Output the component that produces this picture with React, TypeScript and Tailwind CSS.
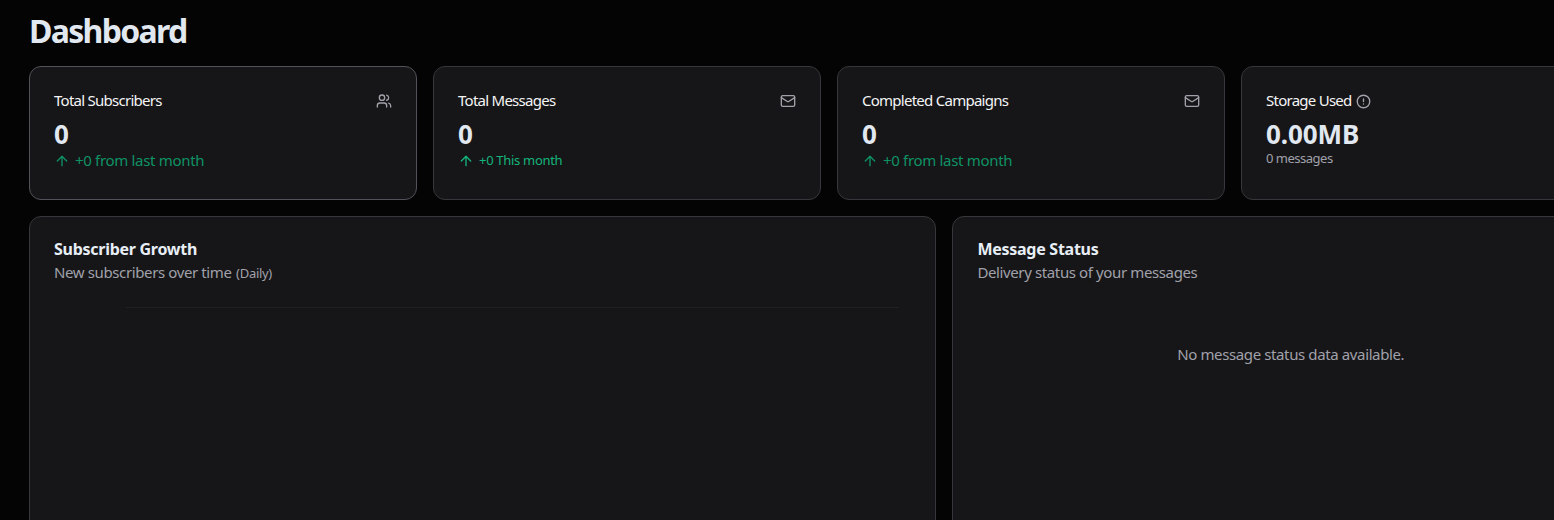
import { ReactNode } from 'react';
import { ArrowUp, CircleAlert, Mail, Users } from 'lucide-react';

interface StatCardProps {
  title: ReactNode;
  value: string;
  icon?: ReactNode;
  active?: boolean;
  children: ReactNode;
}

function StatCard({ title, value, icon, active, children }: StatCardProps) {
  return (
    <div
      className={`h-[134px] rounded-xl border bg-[#161618] p-6 ${
        active ? 'border-[#52525b]' : 'border-[#36363c]'
      }`}
    >
      <div className="flex h-5 items-center justify-between text-[#f4f4f5]">
        <div className="flex items-center gap-1 text-[15px] leading-5">{title}</div>
        {icon}
      </div>
      <div className="mt-2 h-8 text-[26px] leading-[30px] font-bold tracking-[-0.1px] text-[#e2e8f0]">
        {value}
      </div>
      {children}
    </div>
  );
}

function CardTitle({ children }: { children: ReactNode }) {
  return <span className="pb-0.5 leading-[18px] tracking-[-0.74px]">{children}</span>;
}

function MonthlyGrowth() {
  return (
    <div className="flex h-5 items-center gap-[5px] text-[#0f9365]">
      <ArrowUp size={16} strokeWidth={2} />
      <span className="pb-0.5 text-[15px] leading-[18px] tracking-[-0.32px]">+0 from last month</span>
    </div>
  );
}

interface PanelProps {
  title: string;
  description: ReactNode;
  className: string;
  children: ReactNode;
}

function Panel({ title, description, className, children }: PanelProps) {
  return (
    <section className={`h-[420px] rounded-xl border border-[#36363c] bg-[#161618] p-6 ${className}`}>
      <h2 className="h-4 text-[16px] leading-4 font-bold tracking-[-0.27px] text-[#e8eef5]">{title}</h2>
      <p className="mt-[5px] h-5 text-[15px] leading-5 tracking-[-0.38px] text-[#a1a1aa]">
        {description}
      </p>
      {children}
    </section>
  );
}

export default function App() {
  return (
    <div className="h-[520px] w-full overflow-hidden bg-[#040404] font-['Noto_Sans',sans-serif]">
      <main className="w-[1629px] pl-[29px]">
        <h1 className="h-[66px] pt-[11px] text-[32px] leading-10 font-bold tracking-[-1.7px] text-[#e2e8f0]">
          Dashboard
        </h1>

        <div className="grid grid-cols-4 gap-4">
          <StatCard
            title={<CardTitle>Total Subscribers</CardTitle>}
            value="0"
            icon={<Users size={16} className="text-[#a1a1aa]" />}
            active
          >
            <MonthlyGrowth />
          </StatCard>
          <StatCard
            title={<CardTitle>Total Messages</CardTitle>}
            value="0"
            icon={<Mail size={16} className="text-[#a1a1aa]" />}
          >
            <div className="flex h-5 items-center gap-[5px] text-[#14b57b]">
              <ArrowUp size={16} strokeWidth={2} />
              <span className="pb-0.5 text-[13px] leading-[18px] tracking-[-0.3px]">+0 This month</span>
            </div>
          </StatCard>
          <StatCard
            title={<CardTitle>Completed Campaigns</CardTitle>}
            value="0"
            icon={<Mail size={16} className="text-[#a1a1aa]" />}
          >
            <MonthlyGrowth />
          </StatCard>
          <StatCard
            title={
              <>
                <CardTitle>Storage Used</CardTitle>
                <CircleAlert size={15} strokeWidth={2.2} className="text-[#a1a1aa]" />
              </>
            }
            value="0.00MB"
          >
            <p className="text-[13px] leading-[14px] tracking-[-0.5px] text-[#a1a1aa]">0 messages</p>
          </StatCard>
        </div>

        <div className="mt-4 grid grid-cols-7 gap-4">
          <Panel
            className="col-span-4"
            title="Subscriber Growth"
            description={
              <>
                New subscribers over time{' '}
                <span className="ml-px text-[13px] tracking-[-0.3px]">(Daily)</span>
              </>
            }
          >
            {/* top grid line of the empty chart */}
            <div className="mt-[25px] mr-3 ml-[72px] h-px bg-[#202023]" />
          </Panel>
          <Panel
            className="col-span-3"
            title="Message Status"
            description="Delivery status of your messages"
          >
            <p className="mt-[62px] text-center text-[15px] leading-5 tracking-[-0.38px] text-[#a1a1aa]">
              No message status data available.
            </p>
          </Panel>
        </div>
      </main>
    </div>
  );
}
